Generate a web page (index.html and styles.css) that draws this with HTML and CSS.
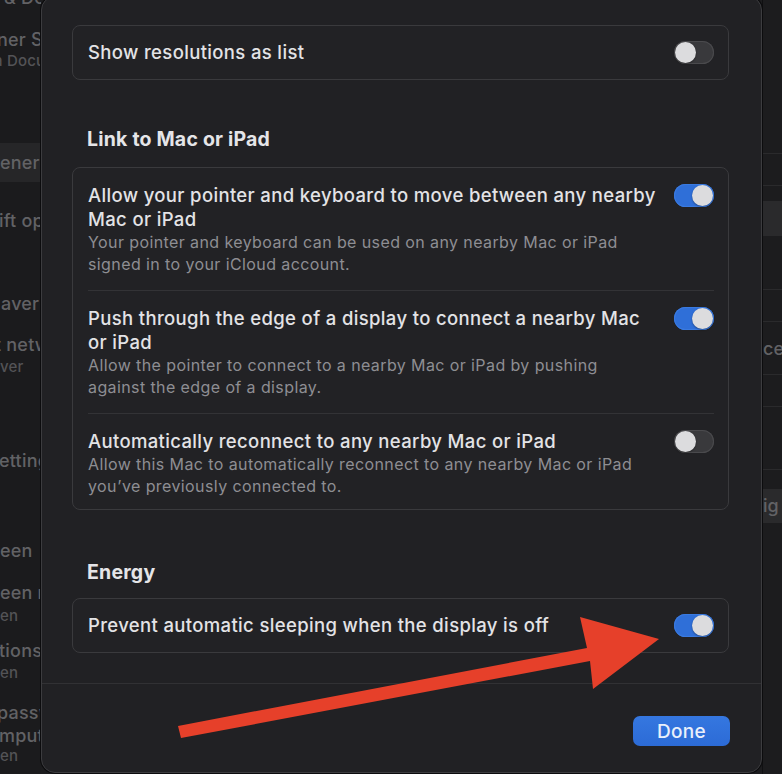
FILE: index.html
```html
<!DOCTYPE html>
<html lang="en">
<head>
<meta charset="utf-8">
<title>Displays – Advanced</title>
<link rel="stylesheet" href="styles.css">
</head>
<body>
<div class="page">
  <aside class="backdrop-left">
    <div class="bl bl-1">&amp; Dock</div>
    <div class="bl bl-2">ner Sharing</div>
    <div class="bl sub bl-3">a Documents</div>
    <div class="bl band bl-4">energy</div>
    <div class="bl bl-5">ift options</div>
    <div class="bl bl-6">aver</div>
    <div class="bl bl-7">t network</div>
    <div class="bl sub bl-8">ver</div>
    <div class="bl bl-9">ettings</div>
    <div class="bl bl-10">een</div>
    <div class="bl bl-11">een mode</div>
    <div class="bl sub bl-12">en</div>
    <div class="bl bl-13">tions</div>
    <div class="bl sub bl-14">en</div>
    <div class="bl bl-15">passwords</div>
    <div class="bl bl-16">mputer</div>
    <div class="bl sub bl-17">en</div>
  </aside>

  <section class="sheet">
    <div class="sheet-body">
      <div class="card">
        <div class="row">
          <div class="row-text">
            <div class="row-title">Show resolutions as list</div>
          </div>
          <span class="toggle"></span>
        </div>
      </div>

      <h2 class="section-title">Link to Mac or iPad</h2>
      <div class="card">
        <div class="row">
          <div class="row-text">
            <div class="row-title">Allow your pointer and keyboard to move between any nearby<br>Mac or iPad</div>
            <div class="row-sub">Your pointer and keyboard can be used on any nearby Mac or iPad<br>signed in to your iCloud account.</div>
          </div>
          <span class="toggle on"></span>
        </div>
        <div class="row">
          <div class="row-text">
            <div class="row-title">Push through the edge of a display to connect a nearby Mac<br>or iPad</div>
            <div class="row-sub">Allow the pointer to connect to a nearby Mac or iPad by pushing<br>against the edge of a display.</div>
          </div>
          <span class="toggle on"></span>
        </div>
        <div class="row row-last">
          <div class="row-text">
            <div class="row-title">Automatically reconnect to any nearby Mac or iPad</div>
            <div class="row-sub">Allow this Mac to automatically reconnect to any nearby Mac or iPad<br>you’ve previously connected to.</div>
          </div>
          <span class="toggle"></span>
        </div>
      </div>

      <h2 class="section-title section-energy">Energy</h2>
      <div class="card">
        <div class="row">
          <div class="row-text">
            <div class="row-title">Prevent automatic sleeping when the display is off</div>
          </div>
          <span class="toggle on"></span>
        </div>
      </div>
    </div>
    <div class="sheet-footer">
      <button class="btn-done" type="button">Done</button>
    </div>
  </section>

  <aside class="backdrop-right">
    <div class="br br-line br-1"></div>
    <div class="br br-line br-2"></div>
    <div class="br br-band br-3"></div>
    <div class="br br-line br-4"></div>
    <div class="br br-line br-5"></div>
    <div class="br br-text br-6">ce</div>
    <div class="br br-line br-7"></div>
    <div class="br br-line br-8"></div>
    <div class="br br-line br-9"></div>
    <div class="br br-band br-text br-10">ig</div>
  </aside>

  <svg class="annotation" width="782" height="774" viewBox="0 0 782 774" aria-hidden="true">
    <polygon points="178,726 587,648 580,617 659,639 593,689 590,661 181,738" fill="#e6402a"/>
  </svg>
</div>
</body>
</html>
```

FILE: styles.css
```css
* { box-sizing: border-box; }

html, body {
  margin: 0;
  padding: 0;
  width: 782px;
  height: 774px;
  overflow: hidden;
  background: #1c1c1e;
}

body {
  font-family: Inter, "Noto Sans", "Liberation Sans", sans-serif;
  -webkit-font-smoothing: antialiased;
}

.page {
  position: relative;
  width: 782px;
  height: 774px;
  display: grid;
  grid-template-columns: 41px 721px 20px;
  overflow: hidden;
}

/* ---------- dimmed window content behind the sheet ---------- */
.backdrop-left {
  background: #1b1b1d;
  overflow: hidden;
  white-space: nowrap;
  color: #626265;
  font-size: 18px;
  font-weight: 500;
  letter-spacing: 0.2px;
}

.bl {
  line-height: 20px;
  height: 20px;
}

.bl.sub {
  font-size: 15px;
  line-height: 18px;
  height: 18px;
  color: #535356;
}

.bl.band {
  height: 39px;
  line-height: 39px;
  background: #262628;
}

.bl-1 { margin-top: -12px; margin-left: 4px; }
.bl-2 { margin-top: 22px; margin-left: -3px; }
.bl-3 { margin-top: 2px; margin-left: -6px; }
.bl-4 { margin-top: 73px; margin-left: 0; }
.bl-5 { margin-top: 29px; margin-left: -1px; }
.bl-6 { margin-top: 63px; margin-left: 1px; }
.bl-7 { margin-top: 21px; margin-left: -5px; }
.bl-8 { margin-top: 3px; margin-left: 0; }
.bl-9 { margin-top: 75px; margin-left: -1px; }
.bl-10 { margin-top: 70px; margin-left: 0; }
.bl-11 { margin-top: 22px; margin-left: 0; }
.bl-12 { margin-top: 4px; margin-left: 0; }
.bl-13 { margin-top: 16px; margin-left: -1px; }
.bl-14 { margin-top: 3px; margin-left: 0; }
.bl-15 { margin-top: 21px; margin-left: -3px; }
.bl-16 { margin-top: 3px; margin-left: -1px; }
.bl-17 { margin-top: 1px; margin-left: 0; }

.backdrop-right {
  background: #1c1c1e;
  overflow: hidden;
  white-space: nowrap;
  color: #626265;
  font-size: 18px;
  font-weight: 500;
  border-left: 1px solid #101012;
}

.br-line { height: 1px; background: #2a2a2c; }
.br-band { background: #2a2a2c; }
.br-text { line-height: 22px; }

.br-1 { margin-top: 153px; }
.br-2 { margin-top: 31px; }
.br-3 { margin-top: 15px; height: 35px; }
.br-4 { margin-top: 53px; }
.br-5 { margin-top: 31px; }
.br-6 { margin-top: 16px; height: 22px; }
.br-7 { margin-top: 14px; }
.br-8 { margin-top: 31px; }
.br-9 { margin-top: 62px; }
.br-10 { margin-top: 19px; height: 34px; line-height: 34px; }

/* ---------- the sheet ---------- */
.sheet {
  margin-top: -4px;
  height: 777px;
  background: #212124;
  border: 1px solid #3c3c3f;
  border-radius: 14px;
  box-shadow: 0 0 0 1px #0c0c0e;
  display: flex;
  flex-direction: column;
  position: relative;
  z-index: 1;
}

.sheet-body {
  padding: 28px 32px 30px 30px;
}

.card {
  border: 1px solid #3a3a3d;
  border-radius: 8px;
  background: #222225;
}

.row {
  display: flex;
  align-items: flex-start;
  margin: 0 14px 0 15px;
  padding: 15px 0;
}

.row + .row {
  border-top: 1px solid #333336;
}

.row-last { padding-bottom: 12px; }

.row-text {
  flex: 1;
  min-width: 0;
}

.row-title {
  font-size: 18.5px;
  line-height: 24px;
  font-weight: 500;
  letter-spacing: 0.35px;
  color: #e3e3e6;
  white-space: nowrap;
}

.card > .row:only-child {
  padding: 15px 0;
}

.card > .row:only-child .row-title {
  line-height: 22px;
}

.row-sub {
  font-size: 16px;
  line-height: 22px;
  letter-spacing: 0.4px;
  color: #8e8e93;
  white-space: nowrap;
}

.section-title {
  margin: 48px 0 17px 15px;
  font-size: 19.5px;
  line-height: 22px;
  font-weight: 700;
  letter-spacing: 0.2px;
  color: #e5e5e8;
}

.section-energy {
  margin-top: 51px;
  margin-bottom: 15px;
}

/* toggles */
.toggle {
  flex: none;
  position: relative;
  width: 40px;
  height: 23px;
  margin-top: 1px;
  border-radius: 12px;
  background: #39393c;
  box-shadow: inset 0 0 0 1px #4a4a4d;
}

.card > .row:only-child .toggle {
  margin-top: 0;
}

.toggle::after {
  content: "";
  position: absolute;
  top: 1px;
  left: 1px;
  width: 21px;
  height: 21px;
  border-radius: 50%;
  background: #dcdcde;
  box-shadow: 0 1px 2px rgba(0, 0, 0, 0.35);
}

.toggle.on {
  background: #2f6fd8;
  box-shadow: inset 0 0 0 1px #3a7ae0;
}

.toggle.on::after {
  left: auto;
  right: 1px;
}

/* footer */
.sheet-footer {
  border-top: 1px solid #313134;
  padding: 32px 31px 0 0;
  display: flex;
  justify-content: flex-end;
}

.btn-done {
  width: 97px;
  height: 30px;
  border: none;
  border-radius: 7px;
  background: linear-gradient(#3577e0, #2c6bd6);
  color: #e9effb;
  font-family: inherit;
  font-size: 19px;
  font-weight: 500;
  letter-spacing: 0.3px;
  padding: 0;
}

/* annotation arrow over the screenshot */
.annotation {
  position: absolute;
  top: 0;
  left: 0;
  z-index: 2;
  pointer-events: none;
}
```
